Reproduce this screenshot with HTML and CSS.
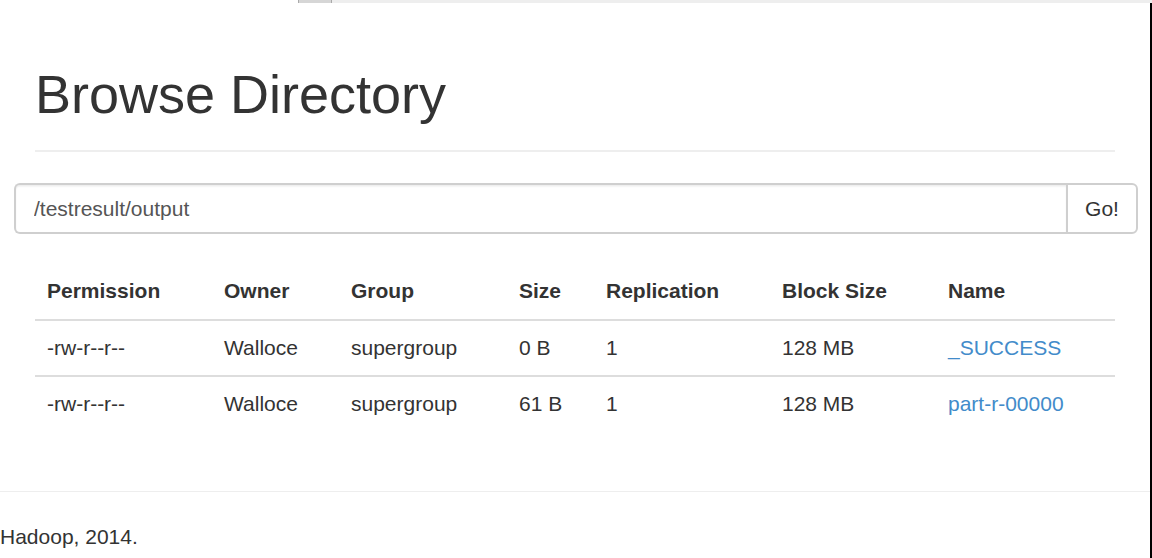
FILE: index.html
```html
<!DOCTYPE html>
<html>
<head>
<meta charset="utf-8">
<title>Browse Directory</title>
<link rel="stylesheet" href="styles.css">
</head>
<body>
<div class="topbar"><div class="topbar-thumb"></div></div>
<div class="page">
  <div class="content">
    <div class="page-header">
      <h1>Browse Directory</h1>
    </div>
    <form class="input-group">
      <input class="path-input" type="text" value="/testresult/output">
      <button class="go-btn" type="button">Go!</button>
    </form>
    <table class="listing">
      <colgroup>
        <col class="c-perm"><col class="c-owner"><col class="c-group"><col class="c-size"><col class="c-repl"><col class="c-block"><col class="c-name">
      </colgroup>
      <thead>
        <tr><th>Permission</th><th>Owner</th><th>Group</th><th>Size</th><th>Replication</th><th>Block Size</th><th>Name</th></tr>
      </thead>
      <tbody>
        <tr><td>-rw-r--r--</td><td>Walloce</td><td>supergroup</td><td>0 B</td><td>1</td><td>128 MB</td><td><a href="#">_SUCCESS</a></td></tr>
        <tr><td>-rw-r--r--</td><td>Walloce</td><td>supergroup</td><td>61 B</td><td>1</td><td>128 MB</td><td><a href="#">part-r-00000</a></td></tr>
      </tbody>
    </table>
  </div>
  <hr class="footer-rule">
  <footer class="footer">Hadoop, 2014.</footer>
</div>
</body>
</html>
```
FILE: styles.css
```css
html, body {
  margin: 0;
  padding: 0;
  background: #fff;
}
body {
  font-family: "Liberation Sans", Arial, sans-serif;
  font-size: 21px;
  line-height: 30px;
  color: #333;
  width: 1152px;
  height: 558px;
  overflow: hidden;
}
.topbar {
  height: 3px;
  margin-left: 298px;
  background: #eeeeee;
  display: flex;
}
.topbar-thumb {
  width: 32px;
  height: 3px;
  background: #d6d6d6;
  border-left: 1px solid #aaa;
  border-right: 1px solid #aaa;
  box-sizing: content-box;
}
.page {
  width: 1150px;
  height: 555px;
  border-right: 2px solid #000;
  display: flex;
  flex-direction: column;
}
.content {
  padding: 0 35px;
}
.page-header {
  margin-top: 61px;
  padding-bottom: 26px;
  border-bottom: 2px solid #eeeeee;
}
.page-header h1 {
  margin: 0;
  font-size: 54px;
  line-height: 60px;
  font-weight: 500;
  color: #333;
}
.input-group {
  display: flex;
  margin: 31px 0 0 -21px;
  width: 1124px;
  height: 51px;
}
.path-input {
  flex: 1;
  height: 51px;
  box-sizing: border-box;
  border: 2px solid #cfcfcf;
  border-right: none;
  border-radius: 6px 0 0 6px;
  padding: 0 18px;
  font-family: "Liberation Sans", Arial, sans-serif;
  font-size: 21px;
  color: #555;
  box-shadow: inset 0 1.5px 1.5px rgba(0,0,0,0.075);
  outline: none;
}
.go-btn {
  width: 72px;
  height: 51px;
  box-sizing: border-box;
  border: 2px solid #cfcfcf;
  border-radius: 0 6px 6px 0;
  background: #fff;
  padding: 0;
  font-family: "Liberation Sans", Arial, sans-serif;
  font-size: 21px;
  color: #333;
}
.listing {
  width: 1080px;
  margin-top: 30px;
  border-collapse: collapse;
  table-layout: fixed;
}
.c-perm { width: 177px; }
.c-owner { width: 127px; }
.c-group { width: 168px; }
.c-size { width: 87px; }
.c-repl { width: 176px; }
.c-block { width: 166px; }
.c-name { width: 179px; }
.listing th, .listing td {
  padding: 12px;
  text-align: left;
  vertical-align: top;
  line-height: 30px;
  white-space: nowrap;
}
.listing th {
  padding: 12px 12px 13px;
  font-weight: bold;
  border-bottom: 2px solid #ddd;
}
.listing td {
  border-top: 2px solid #ddd;
}
.listing a {
  color: #428bca;
  text-decoration: none;
}
.footer-rule {
  margin: 60px 0 0 0;
  border: 0;
  border-top: 1.5px solid #eeeeee;
  height: 0;
}
.footer {
  margin-top: 30px;
  padding: 0;
}
```
